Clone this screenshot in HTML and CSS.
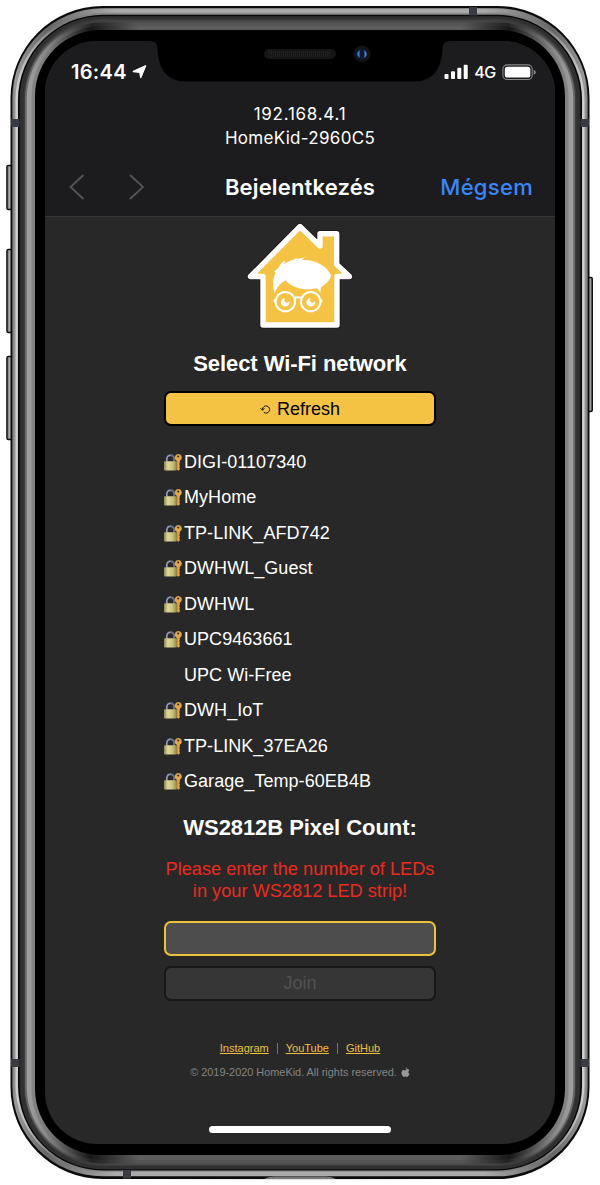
FILE: index.html
```
<!DOCTYPE html>
<html lang="hu">
<head>
<meta charset="utf-8">
<title>HomeKid</title>
<link rel="stylesheet" href="styles.css">
</head>
<body>
<svg class="defs" width="0" height="0">
  <defs>
    <linearGradient id="brass" x1="0" x2="1"><stop offset="0" stop-color="#8d8750"/><stop offset=".3" stop-color="#e0da9c"/><stop offset=".7" stop-color="#c5bf76"/><stop offset="1" stop-color="#8a824a"/></linearGradient>
    <symbol id="lock" viewBox="0 0 18 17">
      <path d="M2.900 8V4.800a3.600 3.600 0 0 1 7.200 0V8" fill="none" stroke="#65718a" stroke-width="2"/>
      <path d="M2.700 7V4.800a3.800 3.800 0 0 1 3.700-3.600" fill="none" stroke="#aab8cb" stroke-width=".8"/>
      <rect x="0" y="7.200" width="12.800" height="9.300" rx=".8" fill="url(#brass)"/>
      <path fill-rule="evenodd" d="M14.200 0a3.600 3.600 0 0 0-1.500 6.800v8.400l1.500 1.500 1.600-1.300v-1.600l-.8-.8.8-.8v-1.300l-.8-.8.8-.8V6.800A3.600 3.600 0 0 0 14.200 0zm0 1.400a1 1 0 1 1 0 2 1 1 0 0 1 0-2z" fill="#e8a63e"/>
      <path d="M13.500 7v8" stroke="#b97a2a" stroke-width=".5"/>
    </symbol>
  </defs>
</svg>
<div class="phone">
  <svg class="frame" viewBox="0 0 600 1185">
    <defs>
      <linearGradient id="rim" x1="0" x2="1"><stop offset="0" stop-color="#777"/><stop offset=".005" stop-color="#999"/><stop offset=".06" stop-color="#656565"/><stop offset=".18" stop-color="#aaa"/><stop offset=".82" stop-color="#aaa"/><stop offset=".94" stop-color="#656565"/><stop offset=".995" stop-color="#999"/><stop offset="1" stop-color="#777"/></linearGradient>
      <linearGradient id="rimHi" x1="0" x2="1"><stop offset="0" stop-color="#d0d0d0"/><stop offset=".07" stop-color="#777"/><stop offset=".2" stop-color="#8c8c8c"/><stop offset=".8" stop-color="#8c8c8c"/><stop offset=".93" stop-color="#777"/><stop offset="1" stop-color="#d0d0d0"/></linearGradient>
      <linearGradient id="mA" x1="0" x2="1"><stop offset="0" stop-color="#6b6b6b"/><stop offset=".1" stop-color="#3a3a3a"/><stop offset=".2" stop-color="#4b4b4b"/><stop offset=".8" stop-color="#4b4b4b"/><stop offset=".9" stop-color="#3a3a3a"/><stop offset="1" stop-color="#6b6b6b"/></linearGradient>
      <linearGradient id="mB" x1="0" x2="1"><stop offset="0" stop-color="#a0a0a0"/><stop offset=".035" stop-color="#888"/><stop offset=".12" stop-color="#222"/><stop offset=".2" stop-color="#545454"/><stop offset=".8" stop-color="#545454"/><stop offset=".88" stop-color="#222"/><stop offset=".965" stop-color="#888"/><stop offset="1" stop-color="#a0a0a0"/></linearGradient>
      <linearGradient id="mC" x1="0" x2="1"><stop offset="0" stop-color="#858585"/><stop offset=".035" stop-color="#777"/><stop offset=".11" stop-color="#171717"/><stop offset=".2" stop-color="#5d5d5d"/><stop offset=".8" stop-color="#5d5d5d"/><stop offset=".89" stop-color="#171717"/><stop offset=".965" stop-color="#777"/><stop offset="1" stop-color="#858585"/></linearGradient>
      <linearGradient id="key" x1="0" x2="1"><stop offset="0" stop-color="#555"/><stop offset=".5" stop-color="#bbb"/><stop offset="1" stop-color="#666"/></linearGradient>
      <radialGradient id="shade"><stop offset="0" stop-color="#555" stop-opacity=".8"/><stop offset="1" stop-color="#fff" stop-opacity="0"/></radialGradient>
    </defs>
    <ellipse cx="300" cy="1177" rx="252" ry="4.500" fill="url(#shade)"/>
    <g fill="url(#key)" stroke="#111" stroke-width="1.400">
      <rect x="6.900" y="165.500" width="6" height="44" rx="1.500"/>
      <rect x="6.900" y="249.500" width="6" height="83" rx="1.500"/>
      <rect x="6.900" y="356.500" width="6" height="83" rx="1.500"/>
      <rect x="587" y="277.500" width="5.300" height="134" rx="1.500"/>
    </g>
    <rect x="10.500" y="6" width="579" height="1173" rx="92" fill="#0b0b0b"/>
    <rect x="12.300" y="8.300" width="575.400" height="1168" rx="90" fill="url(#rim)"/>
    <rect x="15.500" y="12.800" width="569" height="1159" rx="87" fill="url(#rimHi)"/>
    <rect x="18" y="14.800" width="564" height="1155.700" rx="85" fill="#080808"/>
    <rect x="19.700" y="16.200" width="560.600" height="1153" rx="83" fill="#303030"/>
    <rect x="23.500" y="19" width="553" height="1147" rx="80" fill="#3b3b3b"/>
    <rect x="25" y="20.500" width="550" height="1144.500" rx="78" fill="url(#mA)"/>
    <rect x="26.800" y="22.500" width="546.400" height="1141" rx="76" fill="url(#mB)"/>
    <rect x="31.500" y="26" width="537" height="1134" rx="71" fill="url(#mC)"/>
    <rect x="35" y="30" width="530" height="1125" rx="66" fill="#000"/>
    <g fill="#383c42">
      <rect x="11" y="119" width="8.500" height="8"/><rect x="580.500" y="119" width="8.500" height="8"/>
      <rect x="11" y="1059" width="8.500" height="8"/><rect x="580.500" y="1059" width="8.500" height="8"/>
      <rect x="469" y="7" width="8" height="8.500"/><rect x="123" y="1170.500" width="8" height="8"/>
    </g>
    <path d="M264 1179q4-2.500 10-2.500h52q6 0 10 2.500z" fill="#777"/>
  </svg>

  <main class="screen">
    <header class="bar">
      <div class="status">
        <span class="time">16:44</span>
        <svg class="loc" width="15" height="16" viewBox="0 0 15 16"><path d="M13.600 1.800 8.800 13.600 7.800 8.200 1.300 7.500z" fill="#fff" stroke="#fff" stroke-width="1.400" stroke-linejoin="round"/></svg>
        <svg class="signal" width="25" height="16" viewBox="0 0 25 16" fill="#fff"><rect x=".5" y="10" width="4" height="5" rx="1"/><rect x="7" y="7.300" width="4" height="7.700" rx="1"/><rect x="13.300" y="3.800" width="4" height="11.200" rx="1"/><rect x="19.700" y=".8" width="4" height="14.200" rx="1"/></svg>
        <span class="net">4G</span>
        <svg class="battery" width="34" height="17" viewBox="0 0 34 17"><rect x=".9" y=".9" width="29.300" height="14.600" rx="4.300" fill="none" stroke="#88888a" stroke-width="1.100"/><rect x="2.800" y="2.800" width="25.500" height="10.800" rx="2.700" fill="#fff"/><path d="M31.700 5.700q2.100.8 2.100 2.500t-2.100 2.500z" fill="#88888a"/></svg>
      </div>
      <div class="address"><span class="ip">192.168.4.1</span><br><span class="ssid">HomeKid-2960C5</span></div>
      <nav class="nav">
        <svg width="80" height="28" viewBox="0 0 80 28" fill="none" stroke="#555557" stroke-width="1.800"><path d="M16.500 2 3.500 14l13 12M63 2l13 12-13 12"/></svg>
        <b class="title">Bejelentkezés</b>
        <a class="cancel">Mégsem</a>
      </nav>
    </header>

    <section class="portal">
      <svg class="logo" width="106" height="108" viewBox="247 222 106 108">
        <g fill="#f5c343" stroke-linejoin="round">
          <path stroke="#161616" stroke-width="7" d="M300 226.500 250.500 276.500H263V325H337V276.500H349.500L336.700 264.500V233.700H320V246z"/>
          <path stroke="#fff" stroke-width="5.400" d="M300 226.500 250.500 276.500H263V325H337V276.500H349.500L336.700 264.500V233.700H320V246z"/>
        </g>
        <g transform="translate(230 212) scale(.33333)" fill="#fff">
          <path d="M134 244C127 222 128 197 137 183L132 178Q143 173 148 163 153 151 165 147L162 157Q175 146 197 141L195 138 206 140 224 136 216 144C255 142 290 160 304 191 297 208 286 218 273 225L271 242 261 229C225 238 185 228 166 205 149 216 141 227 134 244z"/>
          <g fill="none" stroke="#fff" stroke-width="6"><circle cx="166" cy="269" r="29"/><circle cx="242" cy="269" r="29"/><path d="M193 258q11-5 22 0"/></g>
          <path d="M139 259l-8 4v6l6 6zM269 259l8 4v6l-6 6z"/>
          <path d="M164 258a13 13 0 1 0 14 10l-8 5-7-6zM241 258a13 13 0 1 0 14 10l-8 5-7-6z"/>
        </g>
      </svg>
      <h1 class="heading">Select Wi-Fi network</h1>
      <button class="refresh"><svg width="11" height="11" viewBox="0 0 11 11" fill="none" stroke="#111" stroke-width="1"><path d="M2.500 6V5.200a3.600 3.600 0 1 1 1.300 3.100M.6 4.300l1.900 2 1.800-2"/></svg>Refresh</button>
      <ul class="networks">
        <li><svg><use href="#lock"/></svg>DIGI-01107340</li>
        <li><svg><use href="#lock"/></svg>MyHome</li>
        <li><svg><use href="#lock"/></svg>TP-LINK_AFD742</li>
        <li><svg><use href="#lock"/></svg>DWHWL_Guest</li>
        <li><svg><use href="#lock"/></svg>DWHWL</li>
        <li><svg><use href="#lock"/></svg>UPC9463661</li>
        <li class="open">UPC Wi-Free</li>
        <li><svg><use href="#lock"/></svg>DWH_IoT</li>
        <li><svg><use href="#lock"/></svg>TP-LINK_37EA26</li>
        <li><svg><use href="#lock"/></svg>Garage_Temp-60EB4B</li>
      </ul>
      <h2 class="heading count">WS2812B Pixel Count:</h2>
      <p class="warning">Please enter the number of LEDs<br>in your WS2812 LED strip!</p>
      <input class="field" type="text">
      <button class="join">Join</button>
      <footer class="foot">
        <div class="links"><a>Instagram</a><i></i><a>YouTube</a><i></i><a>GitHub</a></div>
        <div class="copy">© 2019-2020 HomeKid. All rights reserved.<svg width="9" height="11" viewBox="0 0 9 11" fill="#999"><path d="M6.100.3Q6 2 4.400 2.500 4.400 1 6.100.3zM8.200 3.700Q6.200 5 8.500 7.100 7.500 9.900 6.300 9.900 5.400 9.900 4.600 9.500 3.800 9.900 3 9.900 1.600 9.900.7 7.200-.1 3.200 2.500 2.900q1 0 2 .5Q7-.1 8.200 3.700z"/></svg></div>
      </footer>
      <div class="home"></div>
    </section>
  </main>

  <svg class="notch" width="300" height="44" viewBox="150 40 300 44">
    <path d="M150 40v1q7 .2 7.500 7C158 70 168 81.500 186 81.500H414C432 81.500 442 70 442.500 48q.5-6.800 7.500-7v-1z"/>
    <rect x="264" y="49" width="72" height="10" rx="5" fill="#161616"/>
    <path d="M269 54h62" stroke="#202020" stroke-width="6" stroke-dasharray="1 1"/>
    <circle cx="362" cy="54" r="8.500" fill="#111214"/><circle cx="362" cy="54" r="5.500" fill="#101a35"/>
    <path d="M359.500 50q-4.500 4 0 8zM364.500 50q4.500 4 0 8z" fill="#4683cc"/>
  </svg>
</div>
</body>
</html>
```
FILE: styles.css
```
* { box-sizing: border-box; }
body { margin: 0; background: #fff; overflow: hidden; }
.defs { position: absolute; }
.phone { position: relative; width: 600px; height: 1185px; padding: 41px 45px; }
.frame { position: absolute; left: 0; top: 0; width: 600px; height: 1185px; }
.notch { position: absolute; left: 150px; top: 40px; }
.screen { position: relative; height: 1103px; border-radius: 52px; overflow: hidden; background: #282828; color: #fff; }

.bar { height: 176px; background: #1c1c1e; border-bottom: 1px solid #363638; font-family: Inter, sans-serif; }
.status { display: flex; align-items: center; height: 61px; padding: 1px 19px 0 26px; }
.time { font-size: 20px; font-weight: 600; width: 61px; letter-spacing: .3px; }
.signal { margin-left: auto; }
.net { font-size: 16px; font-weight: 500; margin: 0 6px 0 5px; letter-spacing: -.3px; }
.address { text-align: center; font-size: 17px; line-height: 24px; }
.ip { letter-spacing: .75px; }
.ssid { letter-spacing: .3px; }
.nav { display: grid; grid-template-columns: 1fr auto 1fr; align-items: center; height: 73px; padding: 0 22px; }
.title { font-size: 22px; font-weight: 600; letter-spacing: .15px; }
.cancel { justify-self: end; color: #3b86fb; font-size: 22px; font-weight: 500; letter-spacing: .3px; }

.portal { width: 272px; margin: 0 auto; display: flex; flex-direction: column; align-items: center; font-family: "Liberation Sans", Arial, sans-serif; font-size: 18px; }
.logo { margin-top: 5px; }
.heading { margin: 21px 0 14px; font-size: 22px; line-height: 26px; font-weight: 700; white-space: nowrap; letter-spacing: -.07px; }
.refresh, .join, .field { width: 272px; height: 35px; border-radius: 7px; padding: 0; font: 18px "Liberation Sans", Arial, sans-serif; }
.refresh { display: flex; align-items: center; justify-content: center; gap: 6px; padding-top: 1px; border: 2px solid #000; background: #f5c343; color: #000; }
.networks { list-style: none; width: 100%; margin: 18px 0 0; padding: 0; }
.networks li { display: flex; align-items: center; gap: 2px; height: 35.5px; padding-top: 1px; font-size: 18px; letter-spacing: .05px; }
.networks svg { width: 18px; height: 17px; }
.networks .open { padding-left: 20px; }
.count { margin: 16px 0 18px; }
.warning { margin: 0; color: #ed2b1f; font-size: 18.2px; line-height: 21.5px; text-align: center; white-space: nowrap; }
.field { margin-top: 19px; background: #4d4d4d; border: 2px solid #f0c23a; outline: none; }
.join { margin-top: 10px; background: #363636; border: 2px solid #171717; color: #525252; }
.foot { margin-top: 39px; font-size: 11px; line-height: 16px; white-space: nowrap; }
.links { display: flex; align-items: center; justify-content: center; color: #f0c040; text-decoration: underline; }
.links i { width: 1px; height: 11px; margin: 0 8px; background: #777; }
.copy { display: flex; align-items: center; gap: 4px; margin-top: 8px; color: #858585; font-size: 10.9px; }
.home { width: 182px; height: 7px; margin-top: 46px; border-radius: 4px; background: #fff; }
```
